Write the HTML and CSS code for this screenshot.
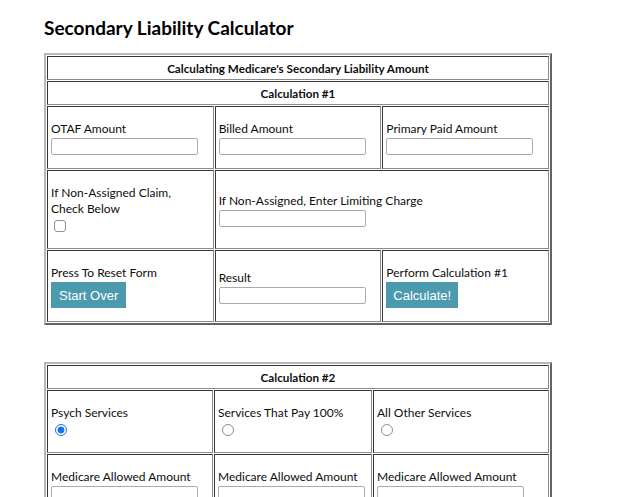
FILE: index.html
```html
<!DOCTYPE html>
<html lang="en">
<head>
<meta charset="utf-8">
<title>Secondary Liability Calculator</title>
<link rel="stylesheet" href="styles.css">
</head>
<body>
<main class="page">
  <h1 class="title">Secondary Liability Calculator</h1>

  <table class="calc calc-one">
    <colgroup><col class="c3"><col class="c3"><col class="c3"></colgroup>
    <tr><th colspan="3" class="head">Calculating Medicare's Secondary Liability Amount</th></tr>
    <tr><th colspan="3" class="head">Calculation #1</th></tr>
    <tr>
      <td class="cell"><label class="lbl">OTAF Amount</label><input class="field" type="text"></td>
      <td class="cell"><label class="lbl">Billed Amount</label><input class="field" type="text"></td>
      <td class="cell"><label class="lbl">Primary Paid Amount</label><input class="field" type="text"></td>
    </tr>
    <tr>
      <td class="cell"><label class="lbl">If Non-Assigned Claim,<br>Check Below</label><input class="check" type="checkbox"></td>
      <td class="cell" colspan="2"><label class="lbl">If Non-Assigned, Enter Limiting Charge</label><input class="field" type="text"></td>
    </tr>
    <tr>
      <td class="cell"><label class="lbl">Press To Reset Form</label><button class="btn" type="button">Start Over</button></td>
      <td class="cell"><label class="lbl">Result</label><input class="field" type="text"></td>
      <td class="cell"><label class="lbl">Perform Calculation #1</label><button class="btn btn-calc" type="button">Calculate!</button></td>
    </tr>
  </table>

  <table class="calc calc-two">
    <colgroup><col class="w1"><col class="w2"><col class="w3"></colgroup>
    <tr><th colspan="3" class="head">Calculation #2</th></tr>
    <tr>
      <td class="cell"><label class="lbl">Psych Services</label><input class="radio" type="radio" name="svc" checked></td>
      <td class="cell"><label class="lbl">Services That Pay 100%</label><input class="radio" type="radio" name="svc"></td>
      <td class="cell"><label class="lbl">All Other Services</label><input class="radio" type="radio" name="svc"></td>
    </tr>
    <tr>
      <td class="cell"><label class="lbl">Medicare Allowed Amount</label><input class="field" type="text"></td>
      <td class="cell"><label class="lbl">Medicare Allowed Amount</label><input class="field" type="text"></td>
      <td class="cell"><label class="lbl">Medicare Allowed Amount</label><input class="field" type="text"></td>
    </tr>
    <tr>
      <td class="cell"><label class="lbl">Press To Reset Form</label><button class="btn" type="button">Start Over</button></td>
      <td class="cell"><label class="lbl">Result</label><input class="field" type="text"></td>
      <td class="cell"><label class="lbl">Perform Calculation #2</label><button class="btn btn-calc" type="button">Calculate!</button></td>
    </tr>
  </table>
</main>
</body>
</html>
```
FILE: styles.css
```css
html, body {
  margin: 0;
  padding: 0;
  background: #ffffff;
}

body {
  font-family: Lato, "Open Sans", sans-serif;
  font-size: 12px;
  line-height: 16px;
  color: #0d0d0d;
}

.page {
  padding: 14px 0 0 44px;
}

.title {
  margin: 0 0 11px 0;
  font-size: 19px;
  line-height: 28px;
  font-weight: 700;
  color: #000000;
}

.calc {
  width: 508px;
  table-layout: fixed;
  border-collapse: separate;
  border-spacing: 1px;
  border: 2px outset #b8b8b8;
}

.calc-two {
  margin-top: 37px;
}

.c3 { width: 33.333%; }
.w1 { width: 166px; }
.w2 { width: 158px; }
.w3 { width: 176px; }

.head {
  border: 1px inset #8a8a8a;
  padding: 3px 4px;
  font-size: 11.7px;
  font-weight: 700;
  text-align: center;
  height: 16px;
}

.cell {
  border: 1px inset #8a8a8a;
  padding: 14px 3px 13px 3px;
  vertical-align: middle;
  text-align: left;
}

.lbl {
  display: block;
}

.field {
  display: block;
  box-sizing: border-box;
  width: 147px;
  height: 17px;
  margin: 1px 0 0 0;
  padding: 0 3px;
  border: 1px solid #ababab;
  border-radius: 2px;
  background: #ffffff;
  font: inherit;
}

.check {
  appearance: none;
  display: block;
  box-sizing: border-box;
  width: 12px;
  height: 12px;
  margin: 3px 0 3px 3px;
  border: 1px solid #8f8f8f;
  border-radius: 3px;
  background: #ffffff;
}

.radio {
  appearance: none;
  display: block;
  box-sizing: border-box;
  width: 12px;
  height: 12px;
  margin: 3px 0 3px 4px;
  border: 1px solid #8f8f8f;
  border-radius: 50%;
  background: #ffffff;
}

.radio:checked {
  border-color: #1a73e8;
  background: radial-gradient(circle, #1a73e8 0 3.2px, #ffffff 3.8px);
}

.btn {
  display: block;
  height: 26px;
  margin: 1px 0 0 0;
  padding: 0 7px;
  border: 1px solid #4b9aad;
  background: #4b9aad;
  color: #ffffff;
  font-family: "Liberation Sans", Arial, sans-serif;
  font-size: 13px;
  cursor: pointer;
}

.btn-calc {
  padding: 0 6px;
}
```
